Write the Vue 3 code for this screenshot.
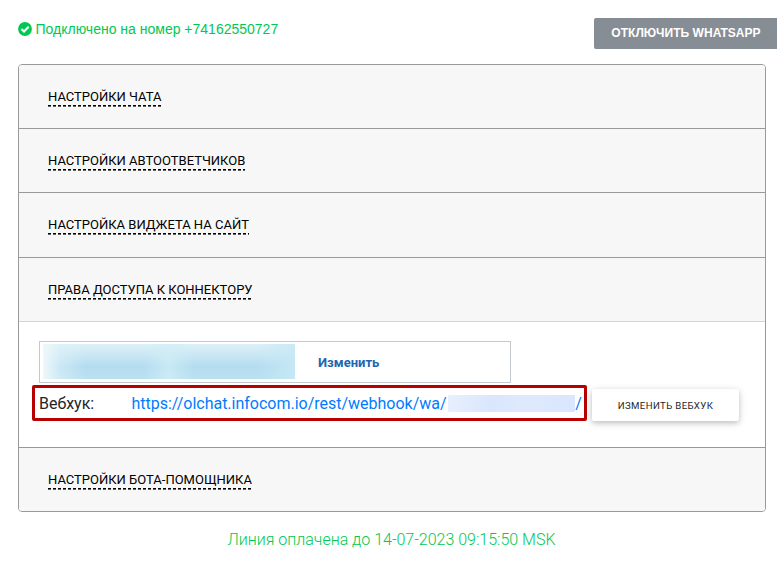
<script setup>
const closedSections = ['Настройки чата', 'Настройки автоответчиков', 'Настройка виджета на сайт']
</script>

<template>
  <main class="page">
    <header class="top">
      <div class="status">
        <svg class="check" viewBox="0 0 14 14">
          <circle cx="7" cy="7" r="6.9" />
          <path d="M3.4 7.1 6 9.5 10.7 4.8" />
        </svg>
        <span>Подключено на номер +74162550727</span>
      </div>
      <button class="disconnect">ОТКЛЮЧИТЬ WHATSAPP</button>
    </header>

    <section class="accordion">
      <div v-for="(title, i) in closedSections" :key="title" class="head" :class="{ tall: i === 2 }">
        <span class="title">{{ title }}</span>
      </div>
      <div class="head open"><span class="title">Права доступа к коннектору</span></div>
      <div class="body">
        <div class="user-box">
          <div class="user-hidden"></div>
          <a class="change">Изменить</a>
        </div>
        <div class="hook-row">
          <div class="hook">
            <span class="label">Вебхук:</span>
            <a class="url">https://olchat.infocom.io/rest/webhook/wa/</a>
            <span class="url-hidden"></span>
            <a class="url">/</a>
          </div>
          <button class="edit-hook">Изменить вебхук</button>
        </div>
      </div>
      <div class="head last"><span class="title">Настройки бота-помощника</span></div>
    </section>

    <footer class="paid">Линия оплачена до 14-07-2023 09:15:50 MSK</footer>
  </main>
</template>

<style>
body { background: #fff; overflow: hidden; }
</style>

<style scoped>
* { box-sizing: border-box; }
.page {
  width: 782px;
  height: 569px;
  padding: 18px 5px 0 18px;
  font-family: Roboto, sans-serif;
  color: #212529;
}
.top { display: flex; justify-content: space-between; height: 46px; }
.status {
  display: flex;
  align-items: center;
  gap: 3.5px;
  height: 22px;
  color: #00c851;
  font: 14px/22px "Liberation Sans", sans-serif;
  white-space: nowrap;
}
.check { width: 14px; height: 14px; }
.check circle { fill: #00c851; }
.check path { fill: none; stroke: #fff; stroke-width: 2.1; }
.disconnect {
  width: 183px;
  height: 31px;
  padding: 0 0 1px 1px;
  border: 0;
  border-radius: 2px 0 0 2px;
  background: #868d95;
  color: #fff;
  font: bold 12px/30px "Liberation Sans", sans-serif;
  letter-spacing: 0.03px;
  white-space: nowrap;
}
.accordion {
  width: 748px;
  height: 448px;
  border: 1px solid #999;
  border-radius: 4px;
  overflow: hidden;
}
.head {
  display: flex;
  align-items: flex-start;
  height: 64px;
  padding: 24px 29px 0;
  border-bottom: 1px solid #999;
  background: #f7f7f7;
}
.tall { height: 65px; }
.open { border-bottom-color: #d6d6d6; }
.last { border-bottom: 0; }
.title {
  height: 18px;
  background:
    repeating-linear-gradient(90deg, #000 0 3px, transparent 3px 5px) 0 16px / 100% 1px no-repeat,
    repeating-linear-gradient(90deg, rgba(0, 0, 0, 0.6) 0 3px, transparent 3px 5px) 0 17px / 100% 1px no-repeat;
  color: #000;
  font-size: 13px;
  line-height: 16px;
  text-transform: uppercase;
  white-space: nowrap;
}
.body { height: 126px; padding: 19px 0 0 13px; border-bottom: 1px solid #999; background: #fff; }
.user-box {
  display: flex;
  align-items: center;
  width: 472px;
  height: 42px;
  margin-left: 7px;
  padding-left: 3px;
  border: 1px solid #c3c9ce;
}
.user-hidden {
  width: 252px;
  height: 35px;
  margin-bottom: 2px;
  background:
    linear-gradient(90deg, #eef8fb 0, rgba(224, 243, 249, 0.5) 7%, rgba(224, 243, 249, 0) 17%, rgba(208, 236, 245, 0) 40%, rgba(208, 238, 245, 0.75) 50%, rgba(208, 236, 245, 0) 60%, rgba(198, 233, 244, 0) 85%, rgba(198, 233, 244, 0.9) 100%),
    linear-gradient(#def1f8, #b4dcf0 65%, #bbe1f1);
}
.change { margin: 2px 0 0 23px; color: #2067b0; font-size: 13px; font-weight: 700; line-height: 20px; }
.hook-row { display: flex; align-items: flex-start; gap: 5px; margin-top: 2px; }
.hook {
  display: flex;
  align-items: center;
  width: 555px;
  height: 36px;
  padding: 2px 0 0 4px;
  border: 3px solid #b90000;
  border-radius: 2px;
  font-size: 16px;
  line-height: 24px;
  letter-spacing: -0.01px;
  white-space: nowrap;
}
.label { width: 92.5px; }
.url { color: #007bff; }
.url-hidden { width: 127px; height: 17px; margin: 0 0 1px 1.6px; background: linear-gradient(100deg, #e8f0fe, #d9e6fd 35%, #dfe9fd 60%, #d9e6fd); }
.edit-hook {
  width: 147px;
  height: 32px;
  margin-top: 4px;
  padding: 1px 0 0;
  border: 0;
  border-radius: 2px;
  background: #fff;
  box-shadow: 0 2px 5px rgba(0, 0, 0, 0.16), 0 2px 10px rgba(0, 0, 0, 0.12);
  color: #212529;
  font: 9.6px/31px Roboto, sans-serif;
  letter-spacing: 0.38px;
  text-transform: uppercase;
}
.paid { width: 747px; margin-top: 16px; color: #00c851; font-size: 16px; font-weight: 300; line-height: 24px; text-align: center; }
</style>
